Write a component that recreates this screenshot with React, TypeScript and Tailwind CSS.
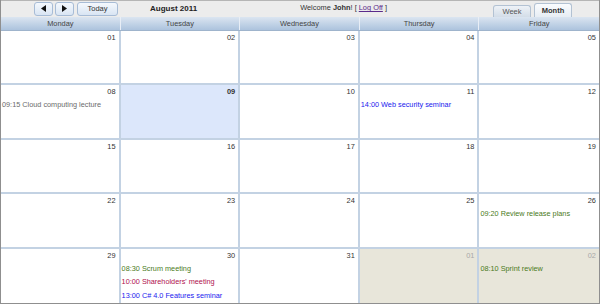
type CalEvent = { time: string; title: string; color: string };
type Day = { n: string; other?: boolean; today?: boolean; events?: CalEvent[] };

const weekdays = ["Monday", "Tuesday", "Wednesday", "Thursday", "Friday"];

const weeks: Day[][] = [
  [{ n: "01" }, { n: "02" }, { n: "03" }, { n: "04" }, { n: "05" }],
  [
    { n: "08", events: [{ time: "09:15", title: "Cloud computing lecture", color: "text-[#6b6b6b]" }] },
    { n: "09", today: true },
    { n: "10" },
    { n: "11", events: [{ time: "14:00", title: "Web security seminar", color: "text-[#1a1aee]" }] },
    { n: "12" },
  ],
  [{ n: "15" }, { n: "16" }, { n: "17" }, { n: "18" }, { n: "19" }],
  [
    { n: "22" },
    { n: "23" },
    { n: "24" },
    { n: "25" },
    { n: "26", events: [{ time: "09:20", title: "Review release plans", color: "text-[#4a7a22]" }] },
  ],
  [
    { n: "29" },
    {
      n: "30",
      events: [
        { time: "08:30", title: "Scrum meeting", color: "text-[#4a7a22]" },
        { time: "10:00", title: "Shareholders' meeting", color: "text-[#b0124e]" },
        { time: "13:00", title: "C# 4.0 Features seminar", color: "text-[#1a1aee]" },
      ],
    },
    { n: "31" },
    { n: "01", other: true },
    { n: "02", other: true, events: [{ time: "08:10", title: "Sprint review", color: "text-[#4a7a22]" }] },
  ],
];

function NavButton({ children, className = "" }: { children: React.ReactNode; className?: string }) {
  return (
    <button
      className={`h-[14px] rounded-[3px] border border-[#a7bcd6] bg-gradient-to-b from-[#f4f8fd] to-[#d9e5f3] flex items-center justify-center text-[7.5px] text-[#333] ${className}`}
    >
      {children}
    </button>
  );
}

export default function App() {
  return (
    <div
      className="w-[600px] h-[304px] flex flex-col bg-white border-x border-b border-[#8f8f8f] overflow-hidden"
      style={{ fontFamily: "'Liberation Sans', Arial, sans-serif" }}
    >
      {/* Toolbar */}
      <div className="h-[17px] shrink-0 flex items-center bg-[#ececec] border-t border-[#b5b5b5]">
        <div className="flex items-center gap-[2px] ml-[33px] mt-[-1px]">
          <NavButton className="w-[19px]">
            <svg width="5" height="7" viewBox="0 0 5 7">
              <path d="M5 0 L0 3.5 L5 7 Z" fill="#111" />
            </svg>
          </NavButton>
          <NavButton className="w-[19px]">
            <svg width="5" height="7" viewBox="0 0 5 7">
              <path d="M0 0 L5 3.5 L0 7 Z" fill="#111" />
            </svg>
          </NavButton>
          <NavButton className="w-[41px] ml-[1px]">Today</NavButton>
        </div>
        <div className="ml-[32px] text-[8px] font-bold text-[#222] mt-[-1px]">August 2011</div>
        <div className="ml-[103px] text-[7.4px] text-[#333] mt-[-2px]">
          Welcome <span className="font-bold">John</span>! [ <span className="underline text-[#5a2a8a]">Log Off</span> ]
        </div>
        <div className="ml-auto mr-[27px] flex items-end self-end gap-[3px]">
          <div className="w-[38px] h-[12px] border border-b-0 border-[#b3c2d3] rounded-t-[3px] bg-gradient-to-b from-[#eef2f7] to-[#d3dde8] text-[7.5px] text-[#555] flex items-center justify-center">
            Week
          </div>
          <div className="w-[38px] h-[14px] border border-b-0 border-[#b3c2d3] rounded-t-[3px] bg-gradient-to-b from-[#fafcfe] to-[#e7edf4] text-[7.5px] font-bold text-[#333] flex items-center justify-center">
            Month
          </div>
        </div>
      </div>

      {/* Weekday header */}
      <div className="h-[14px] shrink-0 grid grid-cols-5 bg-gradient-to-b from-[#dbe5f1] to-[#acc3dd] border-b border-[#9fb4cc]">
        {weekdays.map((d, i) => (
          <div
            key={d}
            className={`flex items-center justify-center text-[7.4px] text-[#444] ${i < 4 ? "border-r border-[#e8eef6]" : ""}`}
          >
            {d}
          </div>
        ))}
      </div>

      {/* Month grid */}
      <div className="flex-1 grid grid-cols-5 grid-rows-5">
        {weeks.map((week, wi) =>
          week.map((day, di) => (
            <div
              key={`${wi}-${di}`}
              className={`flex flex-col overflow-hidden border-[#c3d2e3] ${di < 4 ? "border-r-2" : ""} ${wi < 4 ? "border-b-2" : ""} ${
                day.today ? "bg-[#dce7fb]" : day.other ? "bg-[#e8e6da]" : "bg-white"
              }`}
            >
              <div
                className={`text-right pr-[3px] pt-[2px] text-[7.4px] leading-[10px] ${
                  day.other ? "text-[#a9a9a9]" : "text-[#333]"
                } ${day.today ? "font-bold" : ""}`}
              >
                {day.n}
              </div>
              <div className="flex flex-col gap-[3.5px] pl-[1px] pt-[3px]">
                {day.events?.map((e) => (
                  <div key={e.title} className={`text-[7.3px] leading-[10px] whitespace-nowrap ${e.color}`}>
                    {e.time} {e.title}
                  </div>
                ))}
              </div>
            </div>
          ))
        )}
      </div>
    </div>
  );
}
